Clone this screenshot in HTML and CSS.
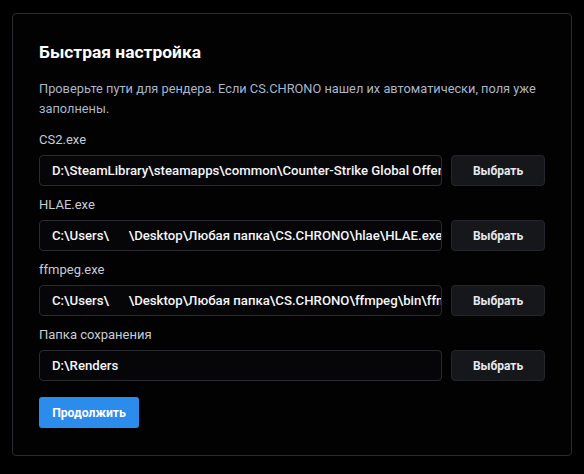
FILE: index.html
```html
<!DOCTYPE html>
<html>
<head>
    <meta charset='utf-8'>
    <title>Быстрая настройка</title>
    <meta name='viewport' content='width=device-width, initial-scale=1'>
    <link rel="stylesheet" href="styles.css">
</head>
<body>
    <div class="card">
        <h1>Быстрая настройка</h1>
        <p class="hint">Проверьте пути для рендера. Если CS.CHRONO нашел их автоматически, поля уже заполнены.</p>

        <div class="field">
            <label>CS2.exe</label>
            <div class="row">
                <input type="text" value="D:\SteamLibrary\steamapps\common\Counter-Strike Global Offensive\game\bin\win64\cs2.exe">
                <button class="pick">Выбрать</button>
            </div>
        </div>

        <div class="field">
            <label>HLAE.exe</label>
            <div class="row">
                <input type="text" value="C:\Users\      \Desktop\Любая папка\CS.CHRONO\hlae\HLAE.exe">
                <button class="pick">Выбрать</button>
            </div>
        </div>

        <div class="field">
            <label>ffmpeg.exe</label>
            <div class="row">
                <input type="text" value="C:\Users\      \Desktop\Любая папка\CS.CHRONO\ffmpeg\bin\ffmpeg.exe">
                <button class="pick">Выбрать</button>
            </div>
        </div>

        <div class="field">
            <label>Папка сохранения</label>
            <div class="row">
                <input type="text" value="D:\Renders">
                <button class="pick">Выбрать</button>
            </div>
        </div>

        <button class="continue">Продолжить</button>
    </div>
</body>
</html>
```

FILE: styles.css
```css
* {
    margin: 0;
    padding: 0;
    box-sizing: border-box;
}

body {
    background: #000;
    font-family: Roboto, "Noto Sans", sans-serif;
    color: #e8eaee;
    padding: 13px 12px;
}

.card {
    border: 1px solid #2a2b30;
    border-radius: 4px;
    padding: 26px 26px 27px;
    background: #020203;
}

h1 {
    font-size: 17.4px;
    line-height: 24px;
    font-weight: 700;
    color: #fff;
    margin-bottom: 15px;
}

.hint {
    font-size: 12.8px;
    line-height: 20px;
    color: #a9b6ca;
    margin-bottom: 12px;
}

.field {
    margin-bottom: 10px;
}

.field label {
    display: block;
    font-size: 13px;
    line-height: 18px;
    color: #c8ccd4;
    margin-bottom: 6px;
}

.row {
    display: flex;
    gap: 9px;
}

.row input {
    flex: 1;
    min-width: 0;
    height: 31px;
    background: #060608;
    border: 1px solid #2a2b30;
    border-radius: 4px;
    padding: 0 0 0 12px;
    font-family: inherit;
    font-size: 13.2px;
    font-weight: 500;
    color: #f4f5f7;
    outline: none;
}

.pick {
    width: 94px;
    height: 31px;
    background: #16171b;
    border: 1px solid #25262b;
    border-radius: 4px;
    font-family: inherit;
    font-size: 12px;
    font-weight: 700;
    color: #e6e9f0;
    cursor: pointer;
}

.continue {
    margin-top: 6px;
    width: 100px;
    height: 31px;
    background: #2b8cec;
    border: none;
    border-radius: 3px;
    font-family: inherit;
    font-size: 12.2px;
    font-weight: 700;
    color: #fff;
    cursor: pointer;
}
```
